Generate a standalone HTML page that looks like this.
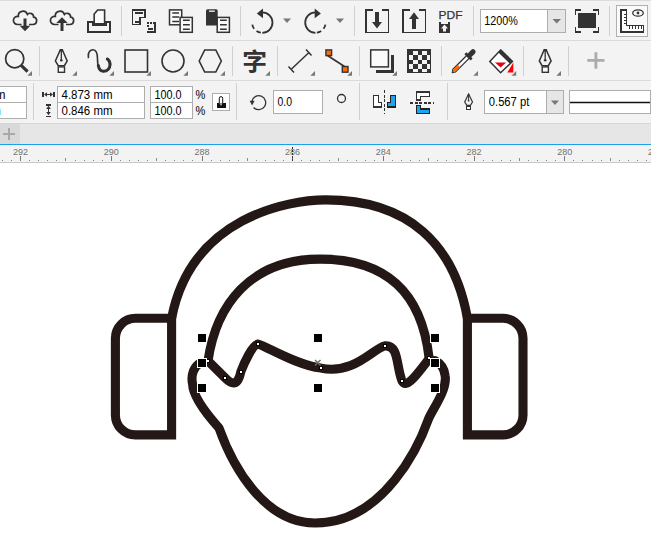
<!DOCTYPE html>
<html lang="zh">
<head>
<meta charset="utf-8">
<title>CorelDRAW</title>
<style>
html,body{margin:0;padding:0;background:#fff;overflow:hidden}
body{width:651px;height:555px;position:relative;font-family:"Liberation Sans","Noto Sans CJK SC",sans-serif}
svg{position:absolute;left:0;top:0;display:block}
text{font-family:"Liberation Sans","Noto Sans CJK SC",sans-serif}
.ui{font-size:12px;fill:#000}
.rl{font-size:9.8px;fill:#707070}
</style>
</head>
<body>
<svg width="651" height="555" viewBox="0 0 651 555">
<!-- ===== BACKGROUNDS ===== -->
<g id="bg" shape-rendering="crispEdges">
<rect x="0" y="0" width="651" height="123" fill="#f3f3f3"/>
<rect x="0" y="0" width="651" height="1" fill="#dcdcdc"/>
<rect x="0" y="40" width="651" height="1" fill="#dadada"/>
<rect x="0" y="80" width="651" height="1" fill="#dadada"/>
<rect x="0" y="123" width="651" height="21" fill="#e6e6e6"/>
<rect x="0" y="123" width="20" height="21" fill="#d9d9d9"/>
<rect x="0" y="123" width="651" height="1" fill="#d6d6d6"/>
<rect x="0" y="144" width="651" height="1" fill="#1ca0e8"/>
<rect x="0" y="145" width="651" height="17" fill="#f3f3f3"/>
<rect x="0" y="162" width="651" height="1" fill="#c8c8c8"/>
<rect x="0" y="163" width="651" height="392" fill="#ffffff"/>
</g>
<!-- ===== ROW1 ===== -->
<g id="row1" fill="none" stroke="#333" stroke-width="2">
<g shape-rendering="crispEdges" stroke="none" fill="#d0d0d0">
<rect x="121" y="6" width="1" height="30"/><rect x="240" y="6" width="1" height="30"/><rect x="354" y="6" width="1" height="30"/><rect x="473" y="6" width="1" height="30"/><rect x="609" y="6" width="1" height="30"/>
</g>
<!-- cloud down -->
<path d="M21.50 24.5 H17.50 A4.1 4.1 0 1 1 18.32 16.38 A4.7 4.7 0 0 1 27.44 14.37 A3.6 3.6 0 0 1 33.59 17.16 A3.7 3.7 0 0 1 32.90 24.5 H29.00" stroke-width="1.700"/>
<path d="M25 18.500 V27" stroke-width="3"/><path d="M19.700 25.800 H30.300 L25 31.300 Z" fill="#333" stroke="none"/>
<!-- cloud up -->
<path d="M58.50 24.5 H54.50 A4.1 4.1 0 1 1 55.32 16.38 A4.7 4.7 0 0 1 64.44 14.37 A3.6 3.6 0 0 1 70.59 17.16 A3.7 3.7 0 0 1 69.90 24.5 H66.00" stroke-width="1.700"/>
<path d="M62 21 V31" stroke-width="3"/><path d="M56.300 23 H67.700 L62 17.300 Z" fill="#333" stroke="none"/>
<!-- print -->
<g shape-rendering="crispEdges"><path d="M88 22 H110 V32 H88 Z" stroke-width="2"/></g>
<path d="M94.200 23.500 V14 L97.700 10 H104.600 V23.500" stroke-width="1.600" fill="#fafafa" stroke-linejoin="miter"/>
<g shape-rendering="crispEdges"><rect x="92" y="23" width="15" height="2.500" fill="#333" stroke="none"/></g>
<!-- copy props -->
<g shape-rendering="crispEdges"><path d="M132.500 10 H145 V17.500 H140 V24.500 H132.500 Z" stroke-width="1.800"/><path d="M135 12.700 H143 M135 21.700 H138.500" stroke-width="1.800"/>
<path d="M153 23 H155 V32 H147" stroke-width="2"/><path d="M147 23 H152" stroke-width="1.500" stroke-dasharray="1.500 1.500"/><path d="M147.750 25 V28" stroke-width="1.500" stroke-dasharray="1.500 1.500"/><path d="M148 29 H153" stroke-width="1.500"/></g>
<!-- copy -->
<rect x="169.500" y="9.900" width="12.200" height="14.900" stroke-width="1.500" fill="#fafafa"/><path d="M172.300 12.900 H179 M172.300 17 H179 M172.300 21.500 H179" stroke-width="1.500"/>
<rect x="180.100" y="17.400" width="12.200" height="14.900" stroke-width="1.500" fill="#fafafa"/><path d="M183 20.300 H189.800 M183 24.700 H189.800 M183 29.200 H189.800" stroke-width="1.500"/>
<!-- paste -->
<path d="M206 25.500 V10.700 A1.500 1.500 0 0 1 207.500 9.200 H216.200 A1.500 1.500 0 0 1 217.700 10.700 V25.500 Z" fill="#333" stroke="none"/><path d="M209 11.200 H214.800" stroke="#e0e0e0" stroke-width="1.500"/>
<rect x="217.200" y="17.400" width="12.200" height="14.900" stroke-width="1.500" fill="#fafafa"/><path d="M220 20.300 H226.800 M220 24.700 H226.800 M220 29.200 H226.800" stroke-width="1.500"/>
<!-- undo -->
<path d="M262.3 12.400000000000002 A10.2 10.2 0 0 1 262.3 32.8" stroke-width="1.800"/><path d="M262.3 32.8 A10.2 10.2 0 0 1 252.10000000000002 22.6" stroke-width="1.800" stroke-dasharray="4.600 3.200" stroke-dashoffset="-1.500"/>
<path d="M256.800 13.400 L263 8.600 V18.200 Z" fill="#333" stroke="none"/>
<path d="M283 18.500 H291 L287 23 Z" fill="#777" stroke="none"/>
<!-- redo -->
<path d="M315.4 12.400000000000002 A10.2 10.2 0 0 0 315.4 32.8" stroke-width="1.800"/><path d="M315.4 32.8 A10.2 10.2 0 0 0 325.59999999999997 22.6" stroke-width="1.800" stroke-dasharray="4.600 3.200" stroke-dashoffset="-1.500"/>
<path d="M320.900 13.400 L314.700 8.600 V18.200 Z" fill="#333" stroke="none"/>
<path d="M336 18.500 H344 L340 23 Z" fill="#777" stroke="none"/>
<!-- import -->
<g shape-rendering="crispEdges"><path d="M372.500 9.750 H365.750 V32.250 H388.250 V9.750 H381.500" stroke-width="1.500"/></g><path d="M377 12 V23" stroke-width="4"/><path d="M372 22 H382 L377 28.500 Z" fill="#333" stroke="none"/>
<!-- export -->
<g shape-rendering="crispEdges"><path d="M409.500 9.750 H402.750 V32.250 H425.250 V9.750 H418.500" stroke-width="1.500"/></g><path d="M414 18 V29" stroke-width="4"/><path d="M409 19 H419 L414 12.300 Z" fill="#333" stroke="none"/>
<!-- pdf -->
<text x="438.500" y="19.400" font-size="11.800" fill="#333" stroke="#333" stroke-width="0.250" textLength="24" lengthAdjust="spacingAndGlyphs">PDF</text>
<g shape-rendering="crispEdges"><path d="M439 22 H450 V33 H439 Z" fill="#333" stroke="none"/><path d="M441 22 H448 V24 H441 Z" fill="#f3f3f3" stroke="none"/></g><path d="M444.500 24.500 L448 28.500 H446 V31.500 H443 V28.500 H441 Z" fill="#f3f3f3" stroke="none"/>
<!-- zoom combo -->
<g shape-rendering="crispEdges"><rect x="480.500" y="9.500" width="85" height="23" fill="#fff" stroke="#adadad" stroke-width="1"/><rect x="547.500" y="9.500" width="18" height="23" fill="#e6e6e6" stroke="#adadad" stroke-width="1"/></g>
<path d="M552.500 19 H561 L556.750 23.500 Z" fill="#777" stroke="none"/>
<text x="484.300" y="25" class="ui" stroke="none" textLength="33.500" lengthAdjust="spacingAndGlyphs">1200%</text>
<!-- fullscreen -->
<g shape-rendering="crispEdges"><rect x="578" y="13" width="18" height="15" fill="#333" stroke="none"/>
<path d="M581 10 H575.500 V15 M593 10 H598.500 V15 M581 32 H575.500 V27 M593 32 H598.500 V27" stroke-width="1.600"/></g>
<!-- ruler button -->
<g shape-rendering="crispEdges"><rect x="616.500" y="5.500" width="31" height="31" fill="#fafafa" stroke="#b0b0b0" stroke-width="1"/>
<path d="M621 10 H626.500 V25.500 H643.500 V32 H621 Z" stroke-width="1.600" fill="#fff"/><path d="M623.500 14.500 H626.500 M623.500 17.500 H626.500 M623.500 20.500 H626.500 M623.500 23.300 H626.500 M629.500 25.500 V29 M632.500 25.500 V29 M635.500 25.500 V29 M638.500 25.500 V29 M641 25.500 V29" stroke-width="1"/></g>
<ellipse cx="638" cy="13" rx="5.300" ry="3.200" stroke-width="1.300"/><circle cx="638" cy="13" r="1.400" fill="#333" stroke="none"/>
</g>
<!-- ===== ROW2 ===== -->
<g id="row2" fill="none" stroke="#333" stroke-width="2">
<g shape-rendering="crispEdges" stroke="none" fill="#d0d0d0">
<rect x="39" y="46" width="1" height="30"/><rect x="232" y="46" width="1" height="30"/><rect x="277" y="46" width="1" height="30"/><rect x="359" y="46" width="1" height="30"/><rect x="441" y="46" width="1" height="30"/><rect x="523" y="46" width="1" height="30"/><rect x="568" y="46" width="1" height="30"/>
</g>
<!-- flyout triangles -->
<g fill="#777" stroke="none">
<path d="M32 71 V75.700 H27.3 Z"/><path d="M77 71 V75.700 H72.3 Z"/><path d="M114 71 V75.700 H109.3 Z"/><path d="M151 71 V75.700 H146.3 Z"/><path d="M188 71 V75.700 H183.3 Z"/><path d="M225 71 V75.700 H220.3 Z"/><path d="M270 71 V75.700 H265.3 Z"/><path d="M315 71 V75.700 H310.3 Z"/><path d="M352 71 V75.700 H347.3 Z"/><path d="M397 71 V75.700 H392.3 Z"/><path d="M478 71 V75.700 H473.3 Z"/><path d="M561 71 V75.700 H556.3 Z"/>
</g>
<!-- zoom tool -->
<circle cx="14.700" cy="58.700" r="9.100" stroke-width="1.700"/><path d="M21.200 65.300 L27.600 71.700" stroke-width="3.200"/>
<!-- pen nib -->
<path d="M60.300 49.800 H62.300 L67.200 61 L64.400 65.700 H58.200 L55.400 61 Z" stroke-width="1.500" stroke-linejoin="miter"/><path d="M61.300 50 V59.500" stroke-width="1.300"/><circle cx="61.300" cy="60.300" r="1.300" fill="#333" stroke="none"/><path d="M60 49.300 H62.600 V51.500 H60 Z" fill="#333" stroke="none"/>
<rect x="58.300" y="66.900" width="6.200" height="5.400" stroke-width="1.400" fill="#fafafa"/>
<!-- freehand -->
<path d="M88.400 57.500 C87.500 52 90.500 49.700 93 49.700 C97 49.700 97.500 55 97.500 59 C97.500 65 99 71.500 103.500 71.500 C108 71.500 110.500 68 110.500 64.500 C110.500 61.500 109 59.500 107 58.500" stroke-width="1.600" stroke-linecap="round"/>
<path d="M98.300 65.500 C99 69.500 100.500 71.300 103.500 71.300 C107.500 71.300 110 68 110 64.500 C110 61.800 108.800 60 107.300 59" stroke-width="3" stroke-linecap="round"/>
<!-- rect -->
<rect x="125" y="50" width="22.500" height="22" stroke-width="1.600"/>
<!-- ellipse -->
<circle cx="173" cy="61" r="11" stroke-width="1.600"/>
<!-- hexagon -->
<path d="M199.200 61 L204.700 50 H215.800 L221.300 61 L215.800 72 H204.700 Z" stroke-width="1.600"/>
<!-- text tool -->
<text x="242.300" y="70.300" font-size="24" textLength="24.800" lengthAdjust="spacingAndGlyphs" font-weight="bold" fill="#333" stroke="none" font-family="'Noto Sans CJK SC','Noto Sans CJK JP',sans-serif">字</text>
<!-- dimension -->
<path d="M291.500 69 L309 52.500" stroke-width="1.500"/><path d="M288.500 66.500 L294 72.500 M306 49.500 L311.500 55.500" stroke-width="1.500"/>
<!-- connector -->
<path d="M327.500 55.500 L344.500 66.500" stroke-width="1.600"/>
<rect x="325.900" y="49.900" width="5.700" height="5.700" fill="#ff6a00" stroke-width="1.400"/><rect x="342.300" y="66.500" width="5.700" height="5.700" fill="#ff6a00" stroke-width="1.400"/>
<!-- shadow -->
<g shape-rendering="crispEdges"><path d="M376 71.500 H392.500 V55" stroke-width="3"/></g><rect x="370.700" y="49.900" width="17.700" height="17" fill="#fafafa" stroke-width="1.500"/>
<!-- transparency checker -->
<g shape-rendering="crispEdges"><rect x="407" y="49" width="24" height="24" fill="#333" stroke="none"/>
<g fill="#f3f3f3" stroke="none">
<rect x="413" y="50.500" width="4.500" height="4.500"/><rect x="422" y="50.500" width="4.500" height="4.500"/>
<rect x="408.500" y="55" width="4.500" height="4.500"/><rect x="417.500" y="55" width="4.500" height="4.500"/><rect x="426.500" y="55" width="3" height="4.500"/>
<rect x="413" y="59.500" width="4.500" height="4.500"/><rect x="422" y="59.500" width="4.500" height="4.500"/>
<rect x="408.500" y="64" width="4.500" height="4.500"/><rect x="417.500" y="64" width="4.500" height="4.500"/><rect x="426.500" y="64" width="3" height="4.500"/>
<rect x="413" y="68.500" width="4.500" height="3"/><rect x="422" y="68.500" width="4.500" height="3"/>
</g></g>
<!-- eyedropper -->
<path d="M452.300 72.500 L455.600 71.900 L469.800 57.600 L467.200 55 L452.900 69.200 Z" stroke-width="1.300" fill="#fff" stroke-linejoin="round"/><path d="M452.600 72.200 L455.400 71.600 L460 67 L457.800 64.800 L453.200 69.400 Z" fill="#ff6a00" stroke="none"/>
<path d="M465.400 53.200 L471.600 59.400" stroke-width="2.800"/><path d="M469.300 55.500 L473 51.800" stroke-width="5.200" stroke-linecap="round"/>
<!-- fill bucket -->
<path d="M500.600 50 L512.400 61.500 L500.600 72.700 L489.800 61.500 Z" stroke-width="1.500" fill="#fff"/><path d="M495 62.400 H506.200 L500.600 67.500 Z" fill="#e60012" stroke="none"/><path d="M499.800 51 L511.300 62.200" stroke-width="4"/>
<path d="M513.300 62.500 V72.600 H507.300 Z" fill="#ff0000" stroke="none"/><path d="M516.200 71 V75.700 H511.500 Z" fill="#777" stroke="none"/>
<!-- outline pen -->
<g transform="translate(483.900 0)"><path d="M60.300 49.800 H62.300 L67.200 61 L64.400 65.700 H58.200 L55.400 61 Z" stroke-width="1.500" stroke-linejoin="miter"/><path d="M61.300 50 V59.500" stroke-width="1.300"/><circle cx="61.300" cy="60.300" r="1.300" fill="#333" stroke="none"/><path d="M60 49.300 H62.600 V51.500 H60 Z" fill="#333" stroke="none"/>
<rect x="58.300" y="66.900" width="6.200" height="5.400" stroke-width="1.400" fill="#fafafa"/></g>
<!-- plus -->
<path d="M587.300 60.400 H604.500 M595.900 52.200 V68.700" stroke="#acacac" stroke-width="2.900"/>
</g>
<!-- ===== ROW3 ===== -->
<g id="row3" fill="none" stroke="#333" stroke-width="1.500">
<g shape-rendering="crispEdges" stroke="none" fill="#d0d0d0">
<rect x="33" y="83" width="1" height="37"/><rect x="236" y="83" width="1" height="37"/><rect x="359" y="83" width="1" height="37"/><rect x="447" y="83" width="1" height="37"/>
</g>
<g shape-rendering="crispEdges" fill="#fff" stroke="#adadad" stroke-width="1">
<rect x="-5.500" y="86.500" width="32" height="16"/><rect x="-5.500" y="102.500" width="32" height="16"/>
<rect x="57.500" y="86.500" width="87" height="16"/><rect x="57.500" y="102.500" width="87" height="16"/>
<rect x="150.500" y="86.500" width="42" height="16"/><rect x="150.500" y="102.500" width="42" height="16"/>
<rect x="212.500" y="93.500" width="17" height="17"/>
<rect x="273.500" y="90.500" width="49" height="23"/>
<rect x="484.500" y="90.500" width="79" height="23"/><rect x="546.500" y="90.500" width="17" height="23" fill="#e6e6e6"/>
<rect x="569.500" y="90.500" width="81" height="23"/>
</g>
<g class="ui" stroke="none" style="fill:#000">
<text x="-4.600" y="99" >m</text>
<text x="-9" y="115" fill="#29a3e8">m</text>
<text x="61.500" y="99" textLength="51" lengthAdjust="spacingAndGlyphs">4.873 mm</text>
<text x="61.500" y="115" textLength="51" lengthAdjust="spacingAndGlyphs">0.846 mm</text>
<text x="154.500" y="99" textLength="27" lengthAdjust="spacingAndGlyphs">100.0</text>
<text x="154.500" y="115" textLength="27" lengthAdjust="spacingAndGlyphs">100.0</text>
<text x="195.500" y="99" textLength="9.800" lengthAdjust="spacingAndGlyphs">%</text>
<text x="195.500" y="115" textLength="9.800" lengthAdjust="spacingAndGlyphs">%</text>
<text x="277.500" y="106" textLength="14.500" lengthAdjust="spacingAndGlyphs">0.0</text>
<text x="488.800" y="106" textLength="40.500" lengthAdjust="spacingAndGlyphs">0.567 pt</text>
</g>
<!-- width/height icons -->
<g shape-rendering="crispEdges" fill="#333" stroke="none"><rect x="42" y="92" width="2" height="5"/><rect x="53" y="92" width="2" height="5"/><rect x="45" y="94" width="7" height="1"/>
<rect x="46" y="104" width="5" height="1.500"/><rect x="46" y="115.500" width="5" height="1.500"/><rect x="48" y="107" width="1" height="7"/></g>
<g fill="#333" stroke="none"><path d="M44 94.500 L47 92.300 V96.700 Z M53 94.500 L50 92.300 V96.700 Z"/><path d="M48.500 105.700 L46.200 109 H50.800 Z M48.500 115.300 L46.200 112 H50.800 Z"/></g>
<!-- lock -->
<g shape-rendering="crispEdges"><rect x="216.500" y="103" width="9" height="5" fill="#111" stroke="none"/></g><path d="M219.300 103.500 V98.300 A1.700 1.700 0 0 1 222.700 98.300 V103.500" stroke="#111" stroke-width="1" fill="#fff"/><path d="M220.200 104 H221.800 L221 106 Z" fill="#fff" stroke="none"/>
<!-- rotate -->
<path d="M253.600 107.500 A7 7 0 1 0 251.800 101.500" stroke-width="1.300"/><path d="M249.600 100.800 H254.600 L252.100 105.500 Z" fill="#333" stroke="none"/>
<!-- degree -->
<circle cx="341.500" cy="98.500" r="4" stroke-width="1.300"/>
<!-- mirror h -->
<g shape-rendering="crispEdges"><path d="M373.500 95.500 H378.500 V102.500 H381.500 V107 H373.500 Z" stroke-width="1.300" fill="#fff"/><path d="M395.500 95.500 H390.500 V102.500 H387.500 V107 H395.500 Z" fill="#1ca4f0" stroke="#222" stroke-width="1.300"/><path d="M384.250 90 V114" stroke-width="1.500" stroke-dasharray="3 1.500"/></g>
<!-- mirror v -->
<g shape-rendering="crispEdges"><path d="M416.500 92 H429.500 V96.500 H420.500 V100 H416.500 Z" stroke-width="1.300" fill="#fff"/><path d="M416.500 113.500 H429.500 V109 H420.500 V105.500 H416.500 Z" fill="#1ca4f0" stroke="#222" stroke-width="1.300"/><path d="M410 102.750 H434" stroke-width="1.500" stroke-dasharray="3 1.500"/></g>
<!-- small pen -->
<path d="M468.600 94 L464.700 102 L466.800 105.300 H470.400 L472.500 102 Z" stroke-width="1.200"/><circle cx="468.600" cy="95" r="1" fill="#333" stroke="none"/><path d="M468.600 94.500 V100" stroke-width="1"/><circle cx="468.600" cy="100.700" r="0.900" fill="#333" stroke="none"/>
<g shape-rendering="crispEdges"><rect x="466.500" y="106.500" width="4" height="3" stroke-width="1" fill="#fff"/></g>
<path d="M551 100.500 H559 L555 105 Z" fill="#777" stroke="none"/>
<path d="M570 102.400 H650" stroke="#111" stroke-width="1.500"/>
</g>
<!-- ===== TABS ===== -->
<g id="tabs"><g shape-rendering="crispEdges"><path d="M3 134 H15 M9 128 V140" stroke="#a8a8a8" stroke-width="2" fill="none"/></g></g>
<!-- ===== RULER ===== -->
<g id="ruler"><g shape-rendering="crispEdges"><g fill="#777"><rect x="20" y="156" width="1" height="5"/><rect x="111" y="156" width="1" height="5"/><rect x="202" y="156" width="1" height="5"/><rect x="292" y="156" width="1" height="5"/><rect x="383" y="156" width="1" height="5"/><rect x="474" y="156" width="1" height="5"/><rect x="564" y="156" width="1" height="5"/></g><g fill="#8a8a8a"><rect x="65" y="158" width="1" height="3"/><rect x="156" y="158" width="1" height="3"/><rect x="247" y="158" width="1" height="3"/><rect x="338" y="158" width="1" height="3"/><rect x="428" y="158" width="1" height="3"/><rect x="519" y="158" width="1" height="3"/><rect x="610" y="158" width="1" height="3"/></g><g fill="#858585"><rect x="2" y="160" width="1" height="1"/><rect x="11" y="160" width="1" height="1"/><rect x="29" y="160" width="1" height="1"/><rect x="38" y="160" width="1" height="1"/><rect x="47" y="160" width="1" height="1"/><rect x="56" y="160" width="1" height="1"/><rect x="75" y="160" width="1" height="1"/><rect x="84" y="160" width="1" height="1"/><rect x="93" y="160" width="1" height="1"/><rect x="102" y="160" width="1" height="1"/><rect x="120" y="160" width="1" height="1"/><rect x="129" y="160" width="1" height="1"/><rect x="138" y="160" width="1" height="1"/><rect x="147" y="160" width="1" height="1"/><rect x="165" y="160" width="1" height="1"/><rect x="174" y="160" width="1" height="1"/><rect x="183" y="160" width="1" height="1"/><rect x="192" y="160" width="1" height="1"/><rect x="211" y="160" width="1" height="1"/><rect x="220" y="160" width="1" height="1"/><rect x="229" y="160" width="1" height="1"/><rect x="238" y="160" width="1" height="1"/><rect x="256" y="160" width="1" height="1"/><rect x="265" y="160" width="1" height="1"/><rect x="274" y="160" width="1" height="1"/><rect x="283" y="160" width="1" height="1"/><rect x="301" y="160" width="1" height="1"/><rect x="310" y="160" width="1" height="1"/><rect x="319" y="160" width="1" height="1"/><rect x="329" y="160" width="1" height="1"/><rect x="347" y="160" width="1" height="1"/><rect x="356" y="160" width="1" height="1"/><rect x="365" y="160" width="1" height="1"/><rect x="374" y="160" width="1" height="1"/><rect x="392" y="160" width="1" height="1"/><rect x="401" y="160" width="1" height="1"/><rect x="410" y="160" width="1" height="1"/><rect x="419" y="160" width="1" height="1"/><rect x="437" y="160" width="1" height="1"/><rect x="446" y="160" width="1" height="1"/><rect x="455" y="160" width="1" height="1"/><rect x="465" y="160" width="1" height="1"/><rect x="483" y="160" width="1" height="1"/><rect x="492" y="160" width="1" height="1"/><rect x="501" y="160" width="1" height="1"/><rect x="510" y="160" width="1" height="1"/><rect x="528" y="160" width="1" height="1"/><rect x="537" y="160" width="1" height="1"/><rect x="546" y="160" width="1" height="1"/><rect x="555" y="160" width="1" height="1"/><rect x="573" y="160" width="1" height="1"/><rect x="582" y="160" width="1" height="1"/><rect x="592" y="160" width="1" height="1"/><rect x="601" y="160" width="1" height="1"/><rect x="619" y="160" width="1" height="1"/><rect x="628" y="160" width="1" height="1"/><rect x="637" y="160" width="1" height="1"/><rect x="646" y="160" width="1" height="1"/></g></g><text x="20.5" y="154.500" text-anchor="middle" class="rl" textLength="15" lengthAdjust="spacingAndGlyphs">292</text><text x="111.2" y="154.500" text-anchor="middle" class="rl" textLength="15" lengthAdjust="spacingAndGlyphs">290</text><text x="201.9" y="154.500" text-anchor="middle" class="rl" textLength="15" lengthAdjust="spacingAndGlyphs">288</text><text x="292.6" y="154.500" text-anchor="middle" class="rl" textLength="15" lengthAdjust="spacingAndGlyphs">286</text><text x="383.3" y="154.500" text-anchor="middle" class="rl" textLength="15" lengthAdjust="spacingAndGlyphs">284</text><text x="474.0" y="154.500" text-anchor="middle" class="rl" textLength="15" lengthAdjust="spacingAndGlyphs">282</text><text x="564.7" y="154.500" text-anchor="middle" class="rl" textLength="15" lengthAdjust="spacingAndGlyphs">280</text><text x="655.5" y="154.500" text-anchor="middle" class="rl" textLength="15" lengthAdjust="spacingAndGlyphs">278</text><g shape-rendering="crispEdges"><path d="M292.500 147 V162" stroke="#333" stroke-width="1" stroke-dasharray="2 1" fill="none"/></g></g>
<!-- ===== DRAWING ===== -->
<g id="drawing" fill="none" stroke="#231815" stroke-width="9.1" stroke-linejoin="miter" stroke-linecap="butt">
<!-- headband -->
<path id="band" d="M171.6 318.3 C191 217 289 199.9 326 199.9 C409 199.9 454.5 245 467.4 318.3"/>
<!-- ears -->
<path d="M171.6 318.3 H135.4 A20 20 0 0 0 115.4 338.3 V414.9 A20 20 0 0 0 135.4 434.9 H171.6 Z"/>
<path d="M467.4 318.3 H503 A20 20 0 0 1 523 338.3 V414.9 A20 20 0 0 1 503 434.9 H467.4 Z"/>
<!-- hair arc -->
<path id="hair" d="M208 361 C216 306 249.4 259.1 320 259.1 C387 259.1 421.7 293.1 429.1 358" stroke-linecap="round"/>
<!-- face -->
<path id="face" stroke-linejoin="round" stroke-linecap="round" d="M201 362.5 C194 366 190.5 375 192.6 384.2 C192.8 394 202 409 219 428 C234 470 266 523 315 523 C385 523 420 443 428.7 418.5 C434 407 447 390 445.2 376 C444.5 369 441 363.5 435 360.5"/>
<!-- fringe -->
<path id="fringe" stroke-linejoin="round" stroke-linecap="round" d="M207.9 360.7 L225 377.7 C230.500 383.200 237.500 388 240.8 371.8 C244 363 252.500 344.800 258 344.1 C267 346.500 297 365.500 320.8 368.1 C354 375 373 348.5 384.8 345.9 C399 344.5 396 366 402.1 381.1 C406.5 389 416.2 375.6 429.3 358.4"/>
</g>
<g id="nodes" fill="#fff" stroke="#000" stroke-width="1">
<rect x="206.500" y="359.500" width="3" height="3"/>
<rect x="223.500" y="376.500" width="3" height="3"/>
<rect x="239.500" y="370.500" width="3" height="3"/>
<rect x="256.500" y="342.500" width="3" height="3"/>
<rect x="319.500" y="366.500" width="3" height="3"/>
<rect x="383.500" y="344.500" width="3" height="3"/>
<rect x="400.500" y="379.500" width="3" height="3"/>
<rect x="427.500" y="356.500" width="3" height="3"/>
</g>
<g id="handles" shape-rendering="crispEdges" fill="#000" stroke="#fff" stroke-width="1">
<rect x="197.500" y="333.500" width="9" height="9"/>
<rect x="313.500" y="333.500" width="9" height="9"/>
<rect x="430.500" y="333.500" width="9" height="9"/>
<rect x="197.500" y="383.500" width="9" height="9"/>
<rect x="313.500" y="383.500" width="9" height="9"/>
<rect x="430.500" y="383.500" width="9" height="9"/>
<rect x="197" y="358" width="10" height="10" fill="#fff" stroke="none"/><rect x="198" y="359" width="8" height="8" stroke="none"/>
<rect x="430" y="358" width="10" height="10" fill="#fff" stroke="none"/><rect x="431" y="359" width="8" height="8" stroke="none"/>
</g>
<g id="xmark" stroke="#6a6a6a" stroke-width="1.4"><path d="M315 360 L320.500 365.500 M320.500 360 L315 365.500"/></g>
</svg>
</body>
</html>
